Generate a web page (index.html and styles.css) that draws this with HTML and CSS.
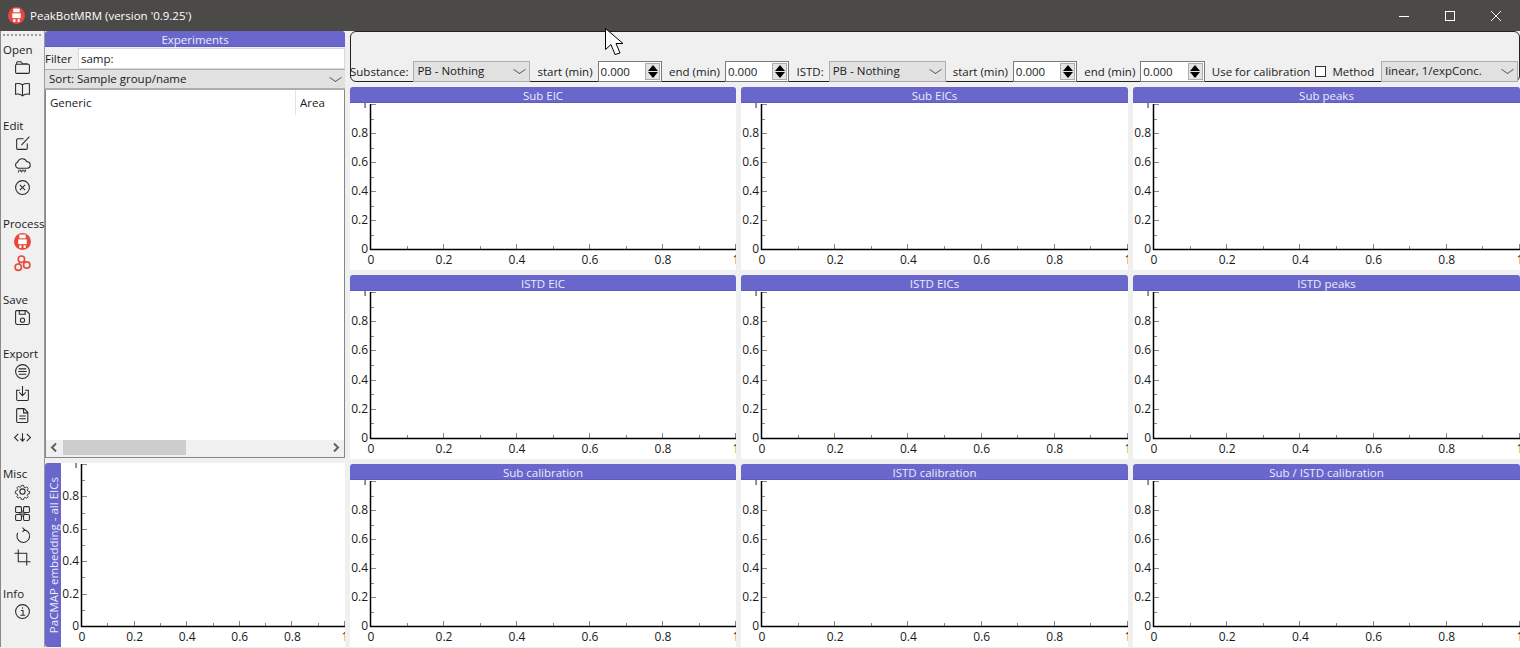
FILE: index.html
```html
<!DOCTYPE html>
<html lang="en">
  <head>
    <meta charset="UTF-8" />
    <title>PeakBotMRM</title>
    <link rel="stylesheet" href="styles.css">
  </head>
  <body>
    <div class="window">
      <div class="titlebar">
        <svg class="app-icon" viewBox="0 0 16 16"><circle cx="8" cy="8" r="8" fill="#e8483d"/><rect x="5" y="1.500" width="6" height="3.500" fill="#fff"/><rect x="4" y="6" width="8" height="4.500" fill="#fff"/><path d="M5 11.500h2v2.500H5zM9 11.500h2v2.500H9z" fill="#fff"/></svg>
        <span class="app-title">PeakBotMRM (version '0.9.25')</span>
        <div class="win-buttons">
          <svg viewBox="0 0 46 30"><path d="M18 15.500h10" stroke="#fff" fill="none"/></svg>
          <svg viewBox="0 0 46 30"><rect x="18.500" y="10.500" width="9" height="9" stroke="#fff" fill="none"/></svg>
          <svg viewBox="0 0 46 30"><path d="M18 10l10 10M28 10L18 20" stroke="#fff" fill="none"/></svg>
        </div>
      </div>

      <div class="main">
        <div class="toolbar">
          <div class="grip"></div>
          <div class="tool-group">
            <div class="tool-label">Open</div>
            <svg class="tool" viewBox="0 0 16 16"><path d="M2.500 5V3.500a1 1 0 0 1 1-1h3l1.500 2h4.500a1 1 0 0 1 1 1V5M1.500 6a1 1 0 0 1 1-1h11a1 1 0 0 1 1 1v6.500a1 1 0 0 1-1 1h-11a1 1 0 0 1-1-1z"/></svg>
            <svg class="tool" viewBox="0 0 16 16"><path d="M8 3.500C6.500 2.500 4 2 1.500 2.500v10C4 12 6.500 12.500 8 14c1.500-1.500 4-2 6.500-1.500v-10C12 2 9.500 2.500 8 3.500zM8 3.500V14"/></svg>
          </div>
          <div class="tool-group">
            <div class="tool-label">Edit</div>
            <svg class="tool" viewBox="0 0 16 16"><path d="M12.500 8v4.500a1 1 0 0 1-1 1h-8a1 1 0 0 1-1-1v-8a1 1 0 0 1 1-1H9M7 9.500L14.500 1.500"/></svg>
            <svg class="tool" viewBox="0 0 16 16"><path d="M4 10.500a3 3 0 0 1-.5-5.800A4.500 4.500 0 0 1 12 4.500a3 3 0 0 1 .5 6zM3 10.500h10M5 12l-1 2.500M8 12l-1 2.500M11 12l-1 2.500M6.500 12l-.5 1.500M9.500 12l-.5 1.500"/></svg>
            <svg class="tool" viewBox="0 0 16 16"><circle cx="8" cy="8" r="6.500"/><path d="M5.500 5.500l5 5M10.500 5.500l-5 5"/></svg>
          </div>
          <div class="tool-group">
            <div class="tool-label">Process</div>
            <svg class="tool" viewBox="0 0 16 16"><circle cx="8" cy="8" r="8" fill="#e8483d" stroke="none"/><rect x="5" y="1.500" width="6" height="3.500" fill="#fff" stroke="none"/><rect x="4" y="6" width="8" height="4.500" fill="#fff" stroke="none"/><path d="M5 11.500h2v2.500H5zM9 11.500h2v2.500H9z" fill="#fff" stroke="none"/></svg>
            <svg class="tool tool-red" viewBox="0 0 16 16"><circle cx="7" cy="4" r="3"/><circle cx="4" cy="11.500" r="3"/><circle cx="12" cy="9.500" r="3"/><path d="M5.500 7l-1 1.500M9.500 6l1 1"/></svg>
          </div>
          <div class="tool-group">
            <div class="tool-label">Save</div>
            <svg class="tool" viewBox="0 0 16 16"><path d="M2.500 1.500h9l3 3v8.500a1.500 1.500 0 0 1-1.500 1.500H3a1.500 1.500 0 0 1-1.500-1.500V2.500a1 1 0 0 1 1-1zM5 1.500v3.500h5.500V1.500"/><circle cx="8" cy="10.500" r="2"/></svg>
          </div>
          <div class="tool-group">
            <div class="tool-label">Export</div>
            <svg class="tool" viewBox="0 0 16 16"><circle cx="8" cy="8" r="6.500"/><path d="M4.500 5.500h7M4 8h8M4.500 10.500h7"/></svg>
            <svg class="tool" viewBox="0 0 16 16"><path d="M5.500 5h-3v8.500a1 1 0 0 0 1 1h9a1 1 0 0 0 1-1V5h-3M8 1v8.500M5 7l3 3 3-3"/></svg>
            <svg class="tool" viewBox="0 0 16 16"><path d="M3.500 1.500h6l3.500 3.500v8.500a1 1 0 0 1-1 1H3.500a1 1 0 0 1-1-1v-11a1 1 0 0 1 1-1zM9 1.500v4h4M5 8.500h6M5 11h6"/></svg>
            <svg class="tool" viewBox="0 0 16 16"><path d="M4 4.500L.5 8 4 11.500M12 4.500L15.500 8 12 11.500M8 4v7M6 9l2 2.500L10 9"/></svg>
          </div>
          <div class="tool-group">
            <div class="tool-label">Misc</div>
            <svg class="tool" viewBox="0 0 16 16"><circle cx="8" cy="8" r="2.500"/><path d="M6.800 1h2.400l.4 2 1.500.7 1.800-1 1.600 1.700-1.100 1.700.7 1.500 2 .4v2.400l-2 .4-.7 1.500 1.100 1.700-1.600 1.700-1.800-1-1.500.7-.4 2H6.800l-.4-2-1.500-.7-1.800 1-1.600-1.700 1.100-1.700-.7-1.500-2-.4V7.500l2-.4.7-1.500L1.500 3.900 3.100 2.200l1.800 1 1.500-.7z" transform="translate(1.400 1.400) scale(.825)"/></svg>
            <svg class="tool" viewBox="0 0 16 16"><rect x="4.500" y="4.500" width="7" height="7" fill="#888" stroke="none"/><rect x="1.500" y="1.500" width="5.500" height="5.500" rx="1" fill="#f0f0f0"/><rect x="9" y="1.500" width="5.500" height="5.500" rx="1" fill="#f0f0f0"/><rect x="1.500" y="9" width="5.500" height="5.500" rx="1" fill="#f0f0f0"/><rect x="9" y="9" width="5.500" height="5.500" rx="1" fill="#f0f0f0"/></svg>
            <svg class="tool" viewBox="0 0 16 16"><path d="M9 2.500a6 6 0 1 1-5.500 3M8 .5l2 2-2 2"/></svg>
            <svg class="tool" viewBox="0 0 16 16"><path d="M4 .5V12h11.500M.5 4H12v11.500"/></svg>
          </div>
          <div class="tool-group">
            <div class="tool-label">Info</div>
            <svg class="tool" viewBox="0 0 16 16"><circle cx="8" cy="8" r="6.500"/><path d="M6.500 7h2v4.500M6 11.500h4.500M8 4v1.500"/></svg>
          </div>
        </div>

        <div class="left-col">
          <div class="panel-head">Experiments</div>
          <div class="filter-row">
            <span class="filter-label">Filter</span>
            <div class="filter-input">samp:</div>
          </div>
          <div class="combo sort-combo">Sort: Sample group/name</div>
          <div class="exp-list">
            <div class="exp-head">
              <span class="exp-generic">Generic</span>
              <span class="exp-area">Area</span>
            </div>
            <div class="exp-body"></div>
            <div class="hscroll">
              <svg class="hscroll-arrow" viewBox="0 0 17 15"><path d="M10 3.500L6 7.500l4 4"/></svg>
              <div class="hscroll-track"><div class="hscroll-thumb"></div></div>
              <svg class="hscroll-arrow" viewBox="0 0 17 15"><path d="M7 3.500l4 4-4 4"/></svg>
            </div>
          </div>
          <div class="pacmap">
            <div class="pacmap-head"><span>PaCMAP embedding - all EICs</span></div>
            <div class="plot"></div>
          </div>
        </div>

        <div class="right-col">
          <div class="group-box">
            <div class="controls">
              <span>Substance:</span>
              <div class="combo combo-sub">PB - Nothing</div>
              <span>start (min)</span>
              <div class="spin"><span class="spin-value">0.000</span><span class="spin-btns"><i class="up"></i><i class="down"></i></span></div>
              <span>end (min)</span>
              <div class="spin"><span class="spin-value">0.000</span><span class="spin-btns"><i class="up"></i><i class="down"></i></span></div>
              <span>ISTD:</span>
              <div class="combo combo-sub">PB - Nothing</div>
              <span>start (min)</span>
              <div class="spin"><span class="spin-value">0.000</span><span class="spin-btns"><i class="up"></i><i class="down"></i></span></div>
              <span>end (min)</span>
              <div class="spin"><span class="spin-value">0.000</span><span class="spin-btns"><i class="up"></i><i class="down"></i></span></div>
              <span>Use for calibration</span>
              <span class="check"></span>
              <span>Method</span>
              <div class="combo combo-method">linear, 1/expConc.</div>
            </div>
          </div>
          <div class="plots">
            <div class="card"><div class="panel-head">Sub EIC</div><div class="plot"></div></div>
            <div class="card"><div class="panel-head">Sub EICs</div><div class="plot"></div></div>
            <div class="card"><div class="panel-head">Sub peaks</div><div class="plot"></div></div>
            <div class="card"><div class="panel-head">ISTD EIC</div><div class="plot"></div></div>
            <div class="card"><div class="panel-head">ISTD EICs</div><div class="plot"></div></div>
            <div class="card"><div class="panel-head">ISTD peaks</div><div class="plot"></div></div>
            <div class="card"><div class="panel-head">Sub calibration</div><div class="plot"></div></div>
            <div class="card"><div class="panel-head">ISTD calibration</div><div class="plot"></div></div>
            <div class="card"><div class="panel-head">Sub / ISTD calibration</div><div class="plot"></div></div>
          </div>
        </div>
      </div>

      <svg class="cursor" viewBox="0 0 20 30"><path d="M.5.5v21l5.500-5 4 10 5-1.500-4-9.500h7z" fill="#fff" stroke="#000"/></svg>
    </div>
    <script src="plots.js"></script>
  </body>
</html>
```

FILE: styles.css
```css
* {
  box-sizing: border-box;
}
html,
body {
  margin: 0;
  height: 100%;
  overflow: hidden;
}
body {
  background-color: #f0f0f0;
  color: #1a1a1a;
  font-family: "Open Sans", "Liberation Sans", sans-serif;
  font-size: 11.5px;
}
.window {
  position: relative;
  display: flex;
  flex-direction: column;
  height: 648px;
  padding-bottom: 1px;
}

/* title bar */
.titlebar {
  display: flex;
  align-items: center;
  flex: none;
  height: 31px;
  background-color: #4c4a48;
  color: #fff;
  padding-left: 8px;
}
.app-icon {
  width: 17px;
  height: 17px;
  margin-right: 5px;
}
.win-buttons {
  display: flex;
  margin-left: auto;
  margin-right: 1px;
}
.win-buttons svg {
  width: 46px;
  height: 30px;
  display: block;
}

.main {
  display: flex;
  flex: 1;
  min-height: 0;
}

/* toolbar */
.toolbar {
  flex: none;
  width: 45px;
  border-left: 1px solid #8a8a8a;
  border-right: 1px solid #9a9a9a;
  padding-top: 3px;
}
.grip {
  height: 2px;
  margin: 0 3px 6px 2px;
  background-image: repeating-linear-gradient(90deg, #a0a0a0 0 2px, transparent 2px 4px);
}
.tool-group {
  display: flex;
  flex-direction: column;
  margin-bottom: 17px;
}
.tool-label {
  height: 16px;
  line-height: 16px;
  margin-bottom: -1px;
  padding-left: 2px;
  white-space: nowrap;
}
.tool {
  display: block;
  width: 17px;
  height: 17px;
  margin: 2px 0 3px 13px;
  fill: none;
  stroke: #2a2a2a;
  stroke-width: 1;
}
.tool-red {
  stroke: #e8483d;
  stroke-width: 1.5;
}

/* left column */
.left-col {
  flex: none;
  display: flex;
  flex-direction: column;
  width: 300px;
}
.panel-head {
  flex: none;
  height: 16px;
  padding-top: 1px;
  line-height: 15px;
  text-align: center;
  background-color: #6966cc;
  border-bottom: 1px solid #5f5bc2;
  border-radius: 3px 3px 0 0;
  color: #ecebfa;
}
.filter-row {
  display: flex;
  flex: none;
  height: 22px;
  align-items: center;
}
.filter-label {
  width: 33px;
}
.filter-input {
  flex: 1;
  height: 21px;
  line-height: 20px;
  padding-left: 2px;
  background-color: #fff;
  border: 1px solid #d8d8d8;
}
.combo {
  position: relative;
  height: 21px;
  line-height: 18px;
  padding-left: 3px;
  background-color: #e1e1e1;
  border: 1px solid #adadad;
  white-space: nowrap;
}
.combo::after {
  content: "";
  position: absolute;
  right: 5px;
  top: 3px;
  width: 8px;
  height: 8px;
  border-right: 1px solid #555;
  border-bottom: 1px solid #555;
  transform: scaleY(.7) rotate(45deg);
}
.sort-combo {
  flex: none;
  padding-left: 4px;
  border-width: 1px 0 2px;
  height: 21px;
}
.exp-list {
  display: flex;
  flex-direction: column;
  flex: none;
  height: 368px;
  background-color: #fff;
  border: 1px solid #828790;
  border-top: 0;
}
.exp-head {
  display: flex;
  flex: none;
  height: 25px;
  line-height: 26px;
}
.exp-generic {
  width: 250px;
  padding-left: 4px;
  border-right: 1px solid #e5e5e5;
}
.exp-area {
  padding-left: 4px;
}
.exp-body {
  flex: 1;
}
.hscroll {
  display: flex;
  flex: none;
  height: 17px;
  background-color: #f0f0f0;
}
.hscroll-arrow {
  flex: none;
  width: 17px;
  height: 15px;
  fill: none;
  stroke: #606060;
  stroke-width: 2;
}
.hscroll-track {
  flex: 1;
}
.hscroll-thumb {
  width: 123px;
  height: 15px;
  background-color: #cdcdcd;
}
.pacmap {
  display: flex;
  flex: 1;
  min-height: 0;
  margin-top: 5px;
}
.pacmap-head {
  display: flex;
  flex: none;
  align-items: center;
  justify-content: center;
  width: 16px;
  background-color: #6966cc;
  border-radius: 3px 0 0 3px;
  color: #ecebfa;
}
.pacmap-head span {
  writing-mode: vertical-rl;
  transform: rotate(180deg);
  white-space: nowrap;
}

/* right column */
.right-col {
  display: flex;
  flex: 1;
  flex-direction: column;
  min-width: 0;
  margin-left: 5px;
}
.group-box {
  flex: none;
  display: flex;
  align-items: flex-end;
  height: 51px;
  border: 1px solid #222;
  border-radius: 6px;
}
.controls {
  display: flex;
  align-items: center;
  width: 100%;
  height: 21px;
  margin-left: -1px;
  margin-bottom: -1px;
  white-space: nowrap;
}
.controls > span {
  margin-right: 5px;
}
.combo-sub {
  flex: none;
  width: 117px;
  margin-right: 7px;
}
.combo-method {
  flex: 1;
  margin-left: 2px;
}
.spin {
  display: flex;
  flex: none;
  align-items: center;
  width: 64.5px;
  height: 21px;
  margin-right: 7px;
  padding: 1px;
  background-color: #fff;
  border: 1px solid #7a7a7a;
}
.spin-value {
  flex: 1;
  padding-left: 1px;
}
.spin-btns {
  display: flex;
  flex: none;
  flex-direction: column;
  justify-content: space-between;
  width: 15px;
  height: 17px;
  padding: 1px;
  background-color: #e4e4e4;
  border: 1px solid #adadad;
}
.spin-btns i {
  display: block;
  width: 0;
  height: 0;
  margin: 0 auto;
  border-left: 5px solid transparent;
  border-right: 5px solid transparent;
}
.spin-btns .up {
  border-bottom: 6px solid #000;
}
.spin-btns .down {
  border-top: 6px solid #000;
}
.controls > .check {
  flex: none;
  width: 11px;
  height: 11px;
  margin-right: 6px;
  background-color: #fff;
  border: 1px solid #333;
}

/* plot grid */
.plots {
  display: grid;
  flex: 1;
  min-height: 0;
  grid-template-columns: 386px 387px 387px;
  grid-template-rows: 183px 184px 1fr;
  gap: 5px;
  margin-top: 5px;
}
.card {
  display: flex;
  flex-direction: column;
  min-width: 0;
  min-height: 0;
}
.plot {
  flex: 1;
  min-width: 0;
  background-color: #fff;
  overflow: hidden;
}
.plot svg {
  display: block;
  width: 100%;
  height: 100%;
}
.plot text {
  fill: #1a1a1a;
  font-size: 12px;
}

/* mouse pointer caught in the shot */
.cursor {
  position: absolute;
  left: 605px;
  top: 28px;
  width: 20px;
  height: 30px;
}
```

FILE: plots.js
```js
// empty matplotlib style axes, 0..1 on both sides
const AXIS_LEFT = 21;
const AXIS_TOP = 1;
const LABELS = ["0", "0.2", "0.4", "0.6", "0.8", "1"];

function line(x1, y1, x2, y2, color, width) {
  return `<line x1="${x1}" y1="${y1}" x2="${x2}" y2="${y2}" stroke="${color}" stroke-width="${width}"/>`;
}

function drawPlot(el) {
  const w = el.clientWidth;
  const h = el.clientHeight;
  const bottom = h - 21;
  const xStep = (w - AXIS_LEFT) / 10;
  const yStep = (bottom - AXIS_TOP) / 10;
  let s = "";

  for (let i = 0; i <= 10; i++) {
    const major = i % 2 === 0;
    const x = Math.round(AXIS_LEFT + i * xStep) - 0.5;
    const y = Math.round(bottom - i * yStep) + 0.5;
    s += line(x, bottom - (major ? 5 : 3), x, bottom, "#888", 1);
    s += line(AXIS_LEFT, y, AXIS_LEFT + (major ? 5 : 3), y, "#888", 1);
    if (major) {
      const label = LABELS[i / 2];
      s += `<text x="${AXIS_LEFT + i * xStep}" y="${bottom + 15}" text-anchor="middle">${label}</text>`;
      s += `<text x="${AXIS_LEFT - 3}" y="${bottom - i * yStep + 4}" text-anchor="end">${label}</text>`;
    }
  }
  s += line(AXIS_LEFT - 0.5, AXIS_TOP, AXIS_LEFT - 0.5, bottom + 1, "#000", 1.5);
  s += line(AXIS_LEFT - 1, bottom + 0.5, w, bottom + 0.5, "#000", 1.5);
  el.innerHTML = `<svg viewBox="0 0 ${w} ${h}">${s}</svg>`;
}

document.querySelectorAll(".plot").forEach(drawPlot);
```
